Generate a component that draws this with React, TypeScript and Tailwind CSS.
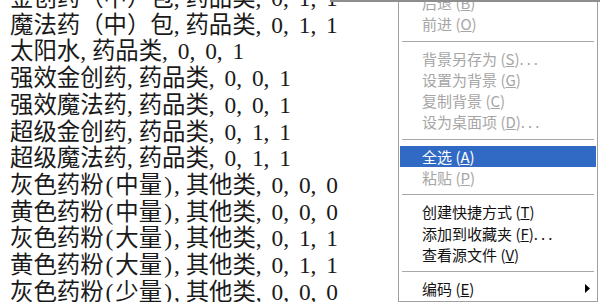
import React from "react";

const P = ({ c }: { c: string }) => <span className="px-[2px]">{c}</span>;

type Row = { name: React.ReactNode; cat: string; nums: string };

const rows: Row[] = [
  { name: "金创药（中）包", cat: "药品类", nums: "0, 1, 1" },
  { name: "魔法药（中）包", cat: "药品类", nums: "0, 1, 1" },
  { name: "太阳水", cat: "药品类", nums: "0, 0, 1" },
  { name: "强效金创药", cat: "药品类", nums: "0, 0, 1" },
  { name: "强效魔法药", cat: "药品类", nums: "0, 0, 1" },
  { name: "超级金创药", cat: "药品类", nums: "0, 1, 1" },
  { name: "超级魔法药", cat: "药品类", nums: "0, 1, 1" },
  { name: <>灰色药粉<P c="(" />中量<P c=")" /></>, cat: "其他类", nums: "0, 0, 0" },
  { name: <>黄色药粉<P c="(" />中量<P c=")" /></>, cat: "其他类", nums: "0, 0, 0" },
  { name: <>灰色药粉<P c="(" />大量<P c=")" /></>, cat: "其他类", nums: "0, 1, 1" },
  { name: <>黄色药粉<P c="(" />大量<P c=")" /></>, cat: "其他类", nums: "0, 1, 1" },
  { name: <>灰色药粉<P c="(" />少量<P c=")" /></>, cat: "其他类", nums: "0, 0, 0" },
];

type ItemProps = {
  label: string;
  k: string;
  dots?: boolean;
  disabled?: boolean;
  active?: boolean;
  arrow?: boolean;
};

const Item = ({ label, k, dots, disabled, active, arrow }: ItemProps) => (
  <div
    className={
      "h-[21.3px] pl-[22px] pr-[6px] flex items-center justify-between " +
      (active ? "bg-[#316ac5] text-white" : disabled ? "text-[#a6a6a6]" : "text-[#111]")
    }
  >
    <span className="leading-[21.3px] whitespace-nowrap">
      {label} (<u>{k}</u>)
      {dots && <span className="tracking-[3px]">...</span>}
    </span>
    {arrow && (
      <svg width="5" height="9" viewBox="0 0 5 9" className="shrink-0">
        <path d="M0 0 L5 4.5 L0 9 Z" fill="#000" />
      </svg>
    )}
  </div>
);

const Sep = () => (
  <div className="h-[13px] flex items-center px-[2px]">
    <div className="h-px w-full bg-[#a8a8a8]" />
  </div>
);

export default function App() {
  return (
    <div className="relative w-[600px] h-[302px] overflow-hidden bg-white">
      <div className="pl-[10px] -mt-[15px] text-[23.4px] leading-[26.7px] text-[#1a1a1a] font-['Liberation_Serif','Noto_Sans_CJK_SC',serif]">
        {rows.map((r, i) => (
          <div key={i} className="whitespace-nowrap">
            {r.name}, {r.cat}
            <span className="[word-spacing:4px]">, {r.nums}</span>
          </div>
        ))}
      </div>

      <div className="absolute left-[398px] top-[-10px] w-[200px] border border-[#a0a0a0] bg-white p-px text-[15px] font-['Noto_Sans_CJK_SC',sans-serif]">
        <Item label="后退" k="B" disabled />
        <Item label="前进" k="O" disabled />
        <Sep />
        <Item label="背景另存为" k="S" dots disabled />
        <Item label="设置为背景" k="G" disabled />
        <Item label="复制背景" k="C" disabled />
        <Item label="设为桌面项" k="D" dots disabled />
        <Sep />
        <Item label="全选" k="A" active />
        <Item label="粘贴" k="P" disabled />
        <Sep />
        <Item label="创建快捷方式" k="T" />
        <Item label="添加到收藏夹" k="F" dots />
        <Item label="查看源文件" k="V" />
        <Sep />
        <Item label="编码" k="E" arrow />
      </div>

      <div className="absolute top-0 left-[330px] right-0 h-[2px] bg-[#8e8e8e]" />
    </div>
  );
}
